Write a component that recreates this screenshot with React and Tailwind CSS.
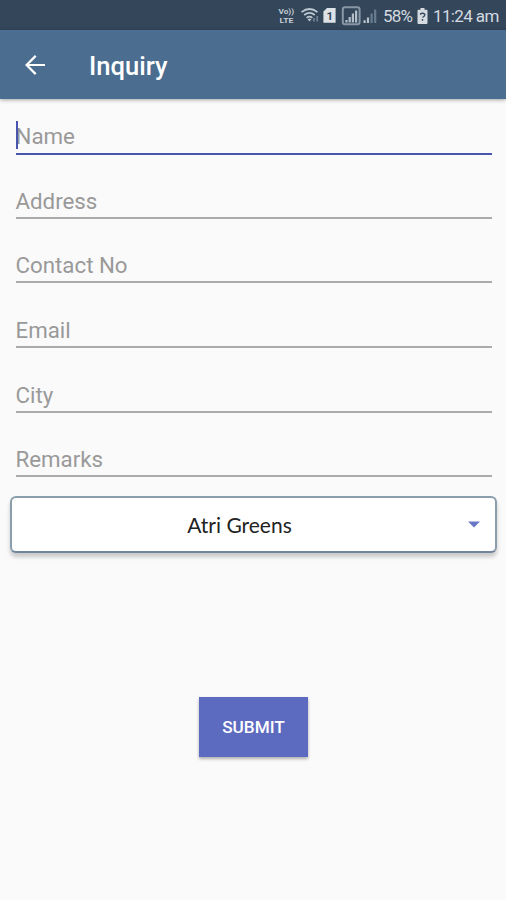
const fields = ['Address', 'Contact No', 'Email', 'City', 'Remarks'];

function StatusIcons() {
  return (
    <svg width="102" height="22" viewBox="277 5 102 22" fill="none" className="mr-[4px] shrink-0">
      {/* VoLTE */}
      <g fill="#c3ccd4" fontFamily="Roboto, sans-serif" fontWeight="700">
        <text x="278.5" y="14" fontSize="7.5" textLength="15.5" lengthAdjust="spacingAndGlyphs">Vo))</text>
        <text x="279.5" y="23.300" fontSize="7.800" textLength="14" lengthAdjust="spacingAndGlyphs">LTE</text>
      </g>
      {/* Wi-Fi */}
      <g stroke="#bdc7d0" strokeWidth="1.7">
        <path d="M301.5 12.2Q309.5 5.8 317.5 12.2" />
        <path d="M304.2 15Q309.5 10.8 314.8 15" />
        <path d="M306.6 17.8Q309.5 15.4 312.4 17.8" />
      </g>
      <path d="M307.6 19.2Q309.5 17.6 311.4 19.2L309.5 21.6Z" fill="#bdc7d0" />
      <path d="M314 21.5v-3.5M317.200 21.5V16" stroke="#6b7f92" strokeWidth="1.8" />
      {/* SIM card */}
      <path d="M327 8h8.6v14.8h-12.2V11.6Z" fill="#dde2e6" />
      <text x="326.6" y="19.8" fontSize="11.5" fontWeight="700" fontFamily="Roboto, sans-serif" fill="#34465a">1</text>
      {/* Signal strength */}
      <rect x="342.8" y="7.3" width="16.8" height="17" rx="2.2" stroke="#8797a6" strokeWidth="2" />
      <path d="M346.5 22.500v-2.500M349.7 22.500v-5.500M352.9 22.500V13.500M356.1 22.500v-12" stroke="#b3bec8" strokeWidth="2.200" />
      <path d="M364.6 23v-2.8M368 23v-5.500" stroke="#b8c3cc" strokeWidth="2.200" />
      <path d="M371.6 23V13.500M375.2 23V9.5" stroke="#697d90" strokeWidth="2.200" />
    </svg>
  );
}

function BatteryIcon() {
  return (
    <svg width="11" height="16" viewBox="0 0 11 16" className="mx-[5px] shrink-0">
      <path d="M3.5 0h4v1.7H9.5q1 0 1 1V15q0 1-1 1h-8q-1 0-1-1V2.700q0-1 1-1h2Z" fill="#d5dbe0" />
      <path d="M3 6.500Q5.500 4 8 6.500Q7.800 8.300 5.500 9.500M5.500 11v1.800" stroke="#34465a" strokeWidth="1.300" fill="none" />
    </svg>
  );
}

export default function App() {
  return (
    <div className="flex h-[900px] w-[506px] flex-col overflow-hidden bg-[#fafafa] font-[Roboto,sans-serif]">
      <div className="flex h-[30px] shrink-0 items-center justify-end bg-[#33465a] pr-[7px] pt-[2px] text-[17px] leading-none text-[#d3dae0]">
        <StatusIcons />
        <span className="w-[29px] whitespace-nowrap tracking-[-0.8px]">58%</span>
        <BatteryIcon />
        <span className="w-[66px] whitespace-nowrap tracking-[-0.62px]">11:24 am</span>
      </div>
      <header className="relative flex h-[69px] shrink-0 items-center bg-[#4b6d8f] shadow-[0_1px_4px_rgba(0,0,0,0.35)]">
        <svg width="20" height="20" viewBox="0 0 20 20" className="ml-[25px] shrink-0" fill="none" stroke="#fff" strokeWidth="2.200">
          <path d="M20 10H1.800M10.700 0.900L1.600 10L10.700 19.100" />
        </svg>
        <h1 className="ml-[44px] mt-[2px] text-[25.600px] font-medium leading-[30px] text-white">Inquiry</h1>
      </header>
      <main className="flex flex-col text-[22.300px] leading-[28px] text-[#999]">
        <div className="ml-[15.500px] mr-[14.500px] flex h-[56px] flex-col justify-end border-b-2 border-[#4854ae]">
          <div className="relative mb-[3px] h-[28px]">
            <span>Name</span>
            <i className="absolute left-[0.500px] top-[-1px] h-[28px] w-[2px] bg-[#4854ae]" />
          </div>
        </div>
        {fields.map((f) => (
          <div key={f} className="ml-[15.500px] mr-[14.500px] flex h-[64.700px] flex-col justify-end">
            <div className="mb-[2px] h-[28px]">{f}</div>
            <div className="mb-[1px] h-[2px] shrink-0 bg-[#ababab]" />
          </div>
        ))}
        <div className="ml-[10px] mr-[9px] mt-[18px] flex h-[57px] items-center rounded-[6px] border-2 border-[#8b9eac] border-b-[#71869b] bg-white shadow-[0_4px_4px_rgba(0,0,0,0.2)]">
          <span className="mr-px mt-px flex-1 text-center font-[Lato,sans-serif] text-[21px] text-[#222]">Atri Greens</span>
          <svg width="12" height="7" viewBox="0 0 12 7" className="mr-[15px]">
            <path d="M0 0.500H12L6 6.500Z" fill="#6878c6" />
          </svg>
        </div>
        <button className="ml-[199px] mt-[144px] h-[60px] w-[109px] bg-[#5c6bc0] text-[17.200px] font-medium text-white shadow-[0_2px_3px_rgba(0,0,0,0.3)]">
          SUBMIT
        </button>
      </main>
    </div>
  );
}
